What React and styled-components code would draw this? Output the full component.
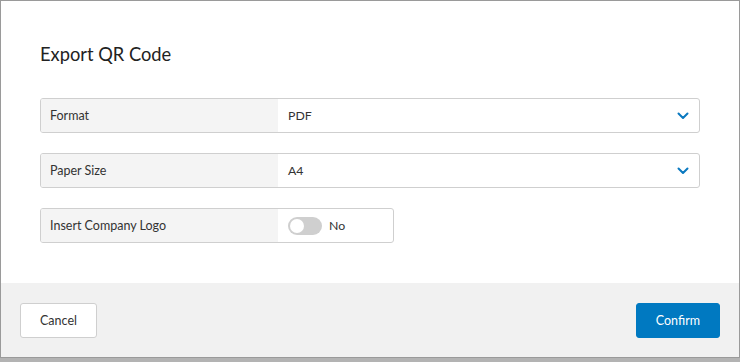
import React, { useState } from 'react';
import styled, { createGlobalStyle } from 'styled-components';

const GlobalStyle = createGlobalStyle`
  html, body {
    margin: 0;
    padding: 0;
    background: #b3b3b3;
  }
  body {
    font-family: Lato, "Open Sans", sans-serif;
    color: #333;
  }
`;

const Dialog = styled.div`
  width: 740px;
  height: 358px;
  box-sizing: border-box;
  border: 1px solid #9a9a9a;
  background: #fff;
  display: flex;
  flex-direction: column;
`;

const Body = styled.div`
  flex: 1;
  padding: 41px 39px 0 39px;
`;

const Title = styled.h2`
  margin: 0 0 32px;
  font-size: 18.3px;
  font-weight: 400;
  line-height: 24px;
  color: #222;
`;

const Fields = styled.div`
  display: flex;
  flex-direction: column;
  gap: 20px;
`;

const Row = styled.div`
  display: flex;
  width: ${(p) => (p.$narrow ? '354px' : '660px')};
  height: 35px;
  box-sizing: border-box;
  border: 1px solid #cfcfcf;
  border-radius: 3px;
  overflow: hidden;
`;

const Label = styled.div`
  width: 237px;
  flex-shrink: 0;
  background: #f4f4f4;
  display: flex;
  align-items: center;
  padding-left: 9px;
  box-sizing: border-box;
  font-size: 12.5px;
  color: #333;
`;

const Value = styled.div`
  flex: 1;
  display: flex;
  align-items: center;
  justify-content: space-between;
  padding: 0 10px 0 10px;
  font-size: 12.3px;
  color: #333;
`;

const Chevron = () => (
  <svg width="12" height="8" viewBox="0 0 12 8">
    <path d="M1.5 1.5 L6 6 L10.5 1.5" fill="none" stroke="#0a79c0" strokeWidth="2" strokeLinecap="round" strokeLinejoin="round" />
  </svg>
);

const SwitchWrap = styled.div`
  display: flex;
  align-items: center;
  gap: 7px;
`;

const Track = styled.div`
  width: 34px;
  height: 18px;
  border-radius: 9px;
  background: ${(p) => (p.$on ? '#0079c1' : '#cfcfcf')};
  display: flex;
  align-items: center;
  justify-content: ${(p) => (p.$on ? 'flex-end' : 'flex-start')};
  padding: 0 2px;
  box-sizing: border-box;
  cursor: pointer;
`;

const Knob = styled.div`
  width: 14px;
  height: 14px;
  border-radius: 50%;
  background: #fff;
`;

const Footer = styled.div`
  height: 74px;
  background: #f1f1f1;
  display: flex;
  align-items: center;
  justify-content: space-between;
  padding: 0 19px;
`;

const Button = styled.button`
  height: 35px;
  padding: 0 19px;
  border-radius: 3px;
  font-family: inherit;
  font-size: 12.5px;
  border: 1px solid ${(p) => (p.$primary ? '#0079c1' : '#cfcfcf')};
  background: ${(p) => (p.$primary ? '#0079c1' : '#fff')};
  color: ${(p) => (p.$primary ? '#fff' : '#333')};
  cursor: pointer;
`;

const App = () => {
  const [logo, setLogo] = useState(false);
  return (
    <>
      <GlobalStyle />
      <Dialog>
        <Body>
          <Title>Export QR Code</Title>
          <Fields>
            <Row>
              <Label>Format</Label>
              <Value>
                PDF
                <Chevron />
              </Value>
            </Row>
            <Row>
              <Label>Paper Size</Label>
              <Value>
                A4
                <Chevron />
              </Value>
            </Row>
            <Row $narrow>
              <Label>Insert Company Logo</Label>
              <Value>
                <SwitchWrap>
                  <Track $on={logo} onClick={() => setLogo(!logo)}>
                    <Knob />
                  </Track>
                  {logo ? 'Yes' : 'No'}
                </SwitchWrap>
              </Value>
            </Row>
          </Fields>
        </Body>
        <Footer>
          <Button>Cancel</Button>
          <Button $primary>Confirm</Button>
        </Footer>
      </Dialog>
    </>
  );
};

export default App;
